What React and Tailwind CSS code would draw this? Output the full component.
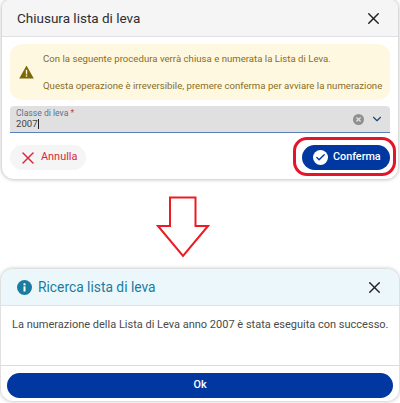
import React from "react";
import { X, Check, ChevronDown } from "lucide-react";

function Arrow() {
  return (
    <svg width="54" height="62" viewBox="0 0 54 62" fill="none">
      <path
        d="M14 1.5H39.5V30H52L27 60L2 30H14Z"
        fill="#fff"
        stroke="#ed1c24"
        strokeWidth="2"
      />
    </svg>
  );
}

function WarnIcon() {
  return (
    <svg width="15" height="14" viewBox="0 0 15 14" className="shrink-0">
      <path d="M7.5 0.5L14.8 13.5H0.2Z" fill="#7d6608" />
      <rect x="6.8" y="4.8" width="1.4" height="4.6" fill="#fff8e1" />
      <rect x="6.8" y="10.2" width="1.4" height="1.5" fill="#fff8e1" />
    </svg>
  );
}

function InfoIcon() {
  return (
    <svg width="15" height="15" viewBox="0 0 15 15" className="shrink-0">
      <circle cx="7.5" cy="7.5" r="7.5" fill="#1a7c9e" />
      <rect x="6.5" y="6.3" width="2" height="5.2" fill="#fff" />
      <rect x="6.5" y="3.3" width="2" height="2" fill="#fff" />
    </svg>
  );
}

function ClearIcon() {
  return (
    <svg width="11" height="11" viewBox="0 0 11 11" className="shrink-0">
      <circle cx="5.5" cy="5.5" r="5.5" fill="#8f8f8f" />
      <path d="M3.4 3.4L7.6 7.6M7.6 3.4L3.4 7.6" stroke="#e0e0e0" strokeWidth="1.4" />
    </svg>
  );
}

export default function App() {
  return (
    <div className="relative w-[400px] h-[403px] bg-white overflow-hidden font-['Roboto',sans-serif]">
      {/* Conferma dialog */}
      <div className="mx-[2px] h-[179px] rounded-b-[12px] rounded-t-[8px] bg-white shadow-[0_0_4px_rgba(0,0,0,0.35)] overflow-hidden">
        <div className="h-[37px] flex items-center justify-between pl-[15px] pr-[15px] bg-[#f5f5f6] border-b border-[#dfe1e6]">
          <span className="text-[13.5px] text-[#2b2f33]">Chiusura lista di leva</span>
          <X className="w-[19px] h-[19px] text-[#222]" strokeWidth={1.8} />
        </div>
        <div className="px-[8px] pt-[7px]">
          <div className="h-[56px] rounded-[12px] bg-[#fff8e1] flex items-center pl-[9px]">
            <WarnIcon />
            <div className="ml-[9px] text-[9.65px] whitespace-nowrap text-[#8a6d1c] leading-[14px]">
              <p>Con la seguente procedura verrà chiusa e numerata la Lista di Leva.</p>
              <p className="mt-[13px]">Questa operazione è irreversibile, premere conferma per avviare la numerazione</p>
            </div>
          </div>
          <div className="mt-[6px] h-[27px] rounded-t-[4px] bg-[#e0e0e0] border-b-[1.5px] border-[#5b7fb8] flex items-center pl-[6px] pr-[6px]">
            <div className="flex-1 leading-none">
              <div className="text-[8.6px] text-[#5a7390] leading-[9px]">
                Classe di leva <span className="text-[#d9344a]">*</span>
              </div>
              <div className="text-[9.6px] text-[#444] leading-[11px] flex items-center">
                2007<span className="w-px h-[10px] bg-[#222]" />
              </div>
            </div>
            <ClearIcon />
            <ChevronDown className="w-[14px] h-[14px] ml-[6px] text-[#21457a]" strokeWidth={2} />
          </div>
          <div className="mt-[12px] flex items-center justify-between">
            <button className="h-[25px] w-[76px] rounded-full bg-[#f5f5f6] flex items-center pl-[8px] text-[#d9283a] text-[10.9px]">
              <X className="w-[20px] h-[20px] mr-[3px]" strokeWidth={1.8} />
              Annulla
            </button>
            <button className="h-[25px] w-[88px] rounded-full bg-[#0037a0] flex items-center pl-[11px] text-white text-[10.8px] font-medium">
              <span className="w-[15px] h-[15px] rounded-full bg-white flex items-center justify-center mr-[5px]">
                <Check className="w-[11px] h-[11px] text-[#0037a0]" strokeWidth={3} />
              </span>
              Conferma
            </button>
          </div>
        </div>
      </div>

      {/* Freccia */}
      <div className="h-[90px] flex justify-center pr-[34px] pt-[17px]">
        <Arrow />
      </div>

      {/* Esito dialog */}
      <div className="mx-[1px] h-[132px] rounded-[12px] bg-white shadow-[0_0_4px_rgba(0,0,0,0.3)] overflow-hidden">
        <div className="h-[37px] flex items-center justify-between pl-[16px] pr-[15px] bg-[#ecf7fb] border-b border-[#e0e4e8]">
          <div className="flex items-center">
            <InfoIcon />
            <span className="ml-[6px] text-[13.8px] text-[#1a7c9e]">Ricerca lista di leva</span>
          </div>
          <X className="w-[19px] h-[19px] text-[#222]" strokeWidth={1.8} />
        </div>
        <div className="h-[59px] px-[11px] pt-[12px] text-[11px] whitespace-nowrap text-[#4a4a4a] leading-[14px]">
          La numerazione della Lista di Leva anno 2007 è stata eseguita con successo.
        </div>
        <div className="border-t border-[#dcdcdc] px-[6px] pt-[5px]">
          <button className="w-full h-[25px] rounded-full bg-[#0037a0] text-white text-[10.8px] font-medium">Ok</button>
        </div>
      </div>

      {/* Evidenziazione */}
      <div className="absolute left-[293px] top-[137px] w-[103px] h-[39px] rounded-[14px] border-[3px] border-[#e5142a]" />
    </div>
  );
}
